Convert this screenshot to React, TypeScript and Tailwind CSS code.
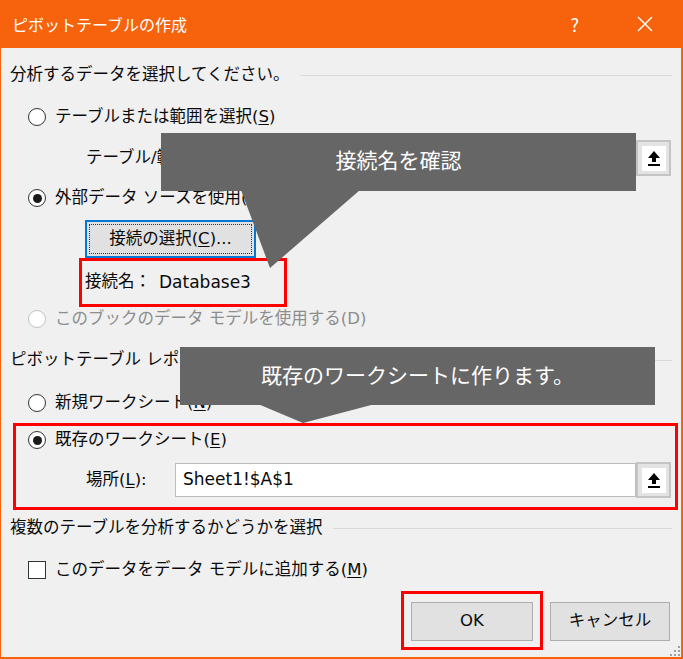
import React from 'react';

function Radio({ checked, disabled }: { checked?: boolean; disabled?: boolean }) {
  return (
    <span
      className={`flex h-[18px] w-[18px] shrink-0 items-center justify-center rounded-full border bg-white ${
        disabled ? 'border-[#c2c2c2]' : 'border-[#333333]'
      }`}
    >
      {checked && <span className="h-[9px] w-[9px] rounded-full bg-[#1a1a1a]" />}
    </span>
  );
}

function UploadButton() {
  return (
    <div className="flex h-[36px] w-[35px] shrink-0 items-center justify-center border-2 border-[#c4c4c4] bg-[#e3e3e3]">
      <div className="flex h-[25px] w-[24px] items-center justify-center bg-white">
        <svg width="14" height="17" viewBox="0 0 14 17">
          <polygon points="7,1 13,8 1,8" fill="#000" />
          <rect x="5" y="7" width="4" height="5" fill="#000" />
          <rect x="1" y="14" width="12" height="2" fill="#000" />
        </svg>
      </div>
    </div>
  );
}

function Heading({ text, mt }: { text: string; mt: string }) {
  return (
    <div className={`flex h-[24px] items-center pl-[9px] pr-[9px] ${mt}`}>
      <span className="whitespace-nowrap">{text}</span>
      <div className="ml-[10px] flex-1 border-t border-[#d9d9d9]" />
    </div>
  );
}

function U({ children }: { children: React.ReactNode }) {
  return <span className="underline underline-offset-2">{children}</span>;
}

export default function App() {
  return (
    <div className="relative flex h-[659px] w-[683px] flex-col overflow-hidden bg-[#f7630c] font-['DejaVu_Sans','Noto_Sans_CJK_JP',sans-serif] text-[16.5px] text-[#0a0a0a]">
      {/* title bar */}
      <div className="flex h-[48px] shrink-0 items-center pl-[12px] pr-[30px] text-white">
        <span className="flex-1 text-[16px] font-['Noto_Sans_CJK_JP',sans-serif]">ピボットテーブルの作成</span>
        <span className="mr-[58px] text-[18px] font-['Noto_Sans_CJK_JP',sans-serif]">?</span>
        <svg width="16" height="16" viewBox="0 0 16 16">
          <line x1="1" y1="1" x2="15" y2="15" stroke="#fff" strokeWidth="1.4" />
          <line x1="15" y1="1" x2="1" y2="15" stroke="#fff" strokeWidth="1.4" />
        </svg>
      </div>

      {/* body */}
      <div className="relative mb-[2px] ml-[1px] mr-[2px] flex flex-1 flex-col bg-[#f0f0f0]">
        <Heading text="分析するデータを選択してください。" mt="mt-[15px]" />

        <div className="ml-[27px] mt-[18px] flex h-[24px] items-center gap-[9px]">
          <Radio />
          <span>
            テーブルまたは範囲を選択(<U>S</U>)
          </span>
        </div>

        <div className="ml-[85px] mr-[10px] mt-[11px] flex h-[36px] items-center">
          <span className="w-[89px] shrink-0 whitespace-nowrap">テーブル/範囲(<U>T</U>):</span>
          <div className="h-[34px] flex-1 border border-[#bdbdbd] bg-white" />
          <UploadButton />
        </div>

        <div className="ml-[27px] mt-[10px] flex h-[24px] items-center gap-[9px]">
          <Radio checked />
          <span>
            外部データ ソースを使用(<U>U</U>)
          </span>
        </div>

        <div className="ml-[84px] mt-[10px] h-[38px] w-[171px] border-2 border-[#0078d7] bg-[#e1e1e1] p-[2px]">
          <div className="flex h-full items-center justify-center border border-dotted border-[#333]">
            接続の選択(<U>C</U>)...
          </div>
        </div>

        <div className="ml-[78px] flex h-[49px] w-[208px] items-center border-[3px] border-[#ff0000] pl-[3px]">
          <span>接続名：</span>
          <span className="ml-[8px] text-[17px]">Database3</span>
        </div>

        <div className="ml-[27px] flex h-[24px] items-center gap-[9px] text-[#8d8d8d]">
          <Radio disabled />
          <span>このブックのデータ モデルを使用する(D)</span>
        </div>

        <Heading text="ピボットテーブル レポートを配置する場所を選択してください。" mt="mt-[17px]" />

        <div className="ml-[27px] mt-[19px] flex h-[24px] items-center gap-[9px]">
          <Radio />
          <span>
            新規ワークシート(<U>N</U>)
          </span>
        </div>

        <div className="ml-[12px] mr-[3px] mt-[8px] flex h-[87px] flex-col border-[3px] border-[#ff0000]">
          <div className="ml-[12px] mt-[2px] flex h-[24px] items-center gap-[9px]">
            <Radio checked />
            <span>
              既存のワークシート(<U>E</U>)
            </span>
          </div>
          <div className="ml-[70px] mr-[4px] mt-[10px] flex h-[36px] items-center">
            <span className="w-[89px] shrink-0 whitespace-nowrap">
              場所(<U>L</U>):
            </span>
            <div className="flex h-[34px] flex-1 items-center border border-[#bdbdbd] bg-white pl-[7px] text-[17px]">
              Sheet1!$A$1
            </div>
            <UploadButton />
          </div>
        </div>

        <Heading text="複数のテーブルを分析するかどうかを選択" mt="mt-[6px]" />

        <div className="ml-[27px] mt-[18px] flex h-[24px] items-center gap-[9px]">
          <span className="h-[18px] w-[18px] shrink-0 border border-[#333] bg-white" />
          <span>
            このデータをデータ モデルに追加する(<U>M</U>)
          </span>
        </div>

        <div className="mt-[9px] flex items-start justify-end gap-[7px] pr-[11px]">
          <div className="h-[59px] w-[142px] border-[3px] border-[#ff0000] pl-[7px] pt-[8px]">
            <div className="flex h-[39px] w-[122px] items-center justify-center border border-[#adadad] bg-[#e1e1e1]">
              OK
            </div>
          </div>
          <div className="mt-[11px] flex h-[39px] w-[120px] items-center justify-center border border-[#adadad] bg-[#e1e1e1]">
            キャンセル
          </div>
        </div>

        {/* size grip */}
        <svg className="absolute bottom-[1px] right-[1px]" width="12" height="12" viewBox="0 0 12 12">
          {[
            [10, 2],
            [10, 6],
            [6, 6],
            [10, 10],
            [6, 10],
            [2, 10],
          ].map(([x, y], i) => (
            <rect key={i} x={x} y={y} width="2" height="2" fill="#a0a0a0" />
          ))}
        </svg>
      </div>

      {/* callouts */}
      <svg className="pointer-events-none absolute left-0 top-0" width="683" height="659">
        <polygon points="241,190 360,190 270,268" fill="#666666" />
        <polygon points="258,404 375,404 303,423" fill="#666666" />
      </svg>
      <div className="absolute left-[161px] top-[133px] flex h-[58px] w-[475px] items-center justify-center bg-[#666666] pb-[4px] font-['Noto_Sans_CJK_JP',sans-serif] text-[21px] text-white">
        接続名を確認
      </div>
      <div className="absolute left-[180px] top-[347px] flex h-[58px] w-[475px] items-center justify-center bg-[#666666] pb-[2px] font-['Noto_Sans_CJK_JP',sans-serif] text-[21px] text-white">
        既存のワークシートに作ります。
      </div>
    </div>
  );
}
